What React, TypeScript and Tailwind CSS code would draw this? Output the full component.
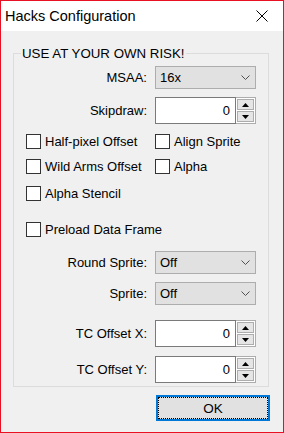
import { useState } from "react";

const font = { fontFamily: '"Liberation Sans", Arial, sans-serif' };

function Chevron() {
  return (
    <svg width="9" height="5" viewBox="0 0 9 5" className="mr-[5px]">
      <polyline points="0.5,0.5 4.5,4.5 8.5,0.5" fill="none" stroke="#505050" strokeWidth="1" />
    </svg>
  );
}

function ComboBox({ value }: { value: string }) {
  return (
    <div className="w-[101px] h-[23px] border border-[#adadad] bg-[#e1e1e1] flex items-center justify-between">
      <span className="pl-[4px]">{value}</span>
      <Chevron />
    </div>
  );
}

function SpinBox({ value }: { value: number }) {
  return (
    <div className="w-[101px] h-[27px] flex">
      <div className="flex-1 border border-[#7a7a7a] bg-white flex items-center justify-end pr-[5px]">
        {value}
      </div>
      <div className="w-[20px] flex flex-col border-y border-r border-[#adadad] bg-white">
        <div className="flex-1 m-[1px] mb-0 border border-[#adadad] bg-[#e5e5e5] flex items-center justify-center">
          <svg width="7" height="4" viewBox="0 0 7 4">
            <polygon points="3.5,0 7,4 0,4" fill="#000" />
          </svg>
        </div>
        <div className="flex-1 m-[1px] border border-[#adadad] bg-[#e5e5e5] flex items-center justify-center">
          <svg width="7" height="4" viewBox="0 0 7 4">
            <polygon points="0,0 7,0 3.5,4" fill="#000" />
          </svg>
        </div>
      </div>
    </div>
  );
}

function Row({ label, children, className }: { label: string; children: React.ReactNode; className: string }) {
  return (
    <div className={`flex items-center ${className}`}>
      <span className="w-[133px] text-right">{label}</span>
      <div className="ml-[8px]">{children}</div>
    </div>
  );
}

function Check({ label, checked, onToggle }: { label: string; checked: boolean; onToggle: () => void }) {
  return (
    <label className="flex items-center h-[15px] cursor-default" onClick={onToggle}>
      <span className="w-[15px] h-[15px] border border-[#333] bg-white flex items-center justify-center">
        {checked && (
          <svg width="11" height="9" viewBox="0 0 11 9">
            <polyline points="1,4.5 4,7.5 10,1" fill="none" stroke="#000" strokeWidth="1.5" />
          </svg>
        )}
      </span>
      <span className="ml-[4px]">{label}</span>
    </label>
  );
}

export default function App() {
  const [checks, setChecks] = useState<Record<string, boolean>>({});
  const toggle = (k: string) => setChecks((c) => ({ ...c, [k]: !c[k] }));
  const cb = (k: string) => <Check label={k} checked={!!checks[k]} onToggle={() => toggle(k)} />;

  return (
    <div
      className="w-[284px] h-[433px] border border-[#e81123] bg-[#f0f0f0] flex flex-col text-[13px] text-black leading-[15px]"
      style={font}
    >
      <div className="h-[30px] bg-white flex items-center justify-between pl-[4px] pr-[15px]">
        <span className="text-[14.5px] leading-[18px]">Hacks Configuration</span>
        <svg width="12" height="12" viewBox="0 0 12 12">
          <path d="M0.5 0.5 L11.5 11.5 M11.5 0.5 L0.5 11.5" stroke="#000" strokeWidth="1" />
        </svg>
      </div>

      <div className="flex flex-col pl-[12px] pr-[14px] pt-[15px]">
        <fieldset className="border border-[#dcdcdc] pb-[3px]">
          <legend className="ml-[7px] px-[1px] text-[13.3px] leading-[15px]">USE AT YOUR OWN RISK!</legend>

          <Row label="MSAA:" className="mt-[5px] h-[23px]">
            <ComboBox value="16x" />
          </Row>
          <Row label="Skipdraw:" className="mt-[8px] h-[27px]">
            <SpinBox value={0} />
          </Row>

          <div className="flex mt-[10px] pl-[12px]">
            <div className="w-[129px]">{cb("Half-pixel Offset")}</div>
            {cb("Align Sprite")}
          </div>
          <div className="flex mt-[10px] pl-[12px]">
            <div className="w-[129px]">{cb("Wild Arms Offset")}</div>
            {cb("Alpha")}
          </div>
          <div className="flex mt-[12px] pl-[12px]">{cb("Alpha Stencil")}</div>
          <div className="flex mt-[21px] pl-[12px]">{cb("Preload Data Frame")}</div>

          <Row label="Round Sprite:" className="mt-[14px] h-[23px]">
            <ComboBox value="Off" />
          </Row>
          <Row label="Sprite:" className="mt-[8px] h-[23px]">
            <ComboBox value="Off" />
          </Row>
          <Row label="TC Offset X:" className="mt-[15px] h-[27px]">
            <SpinBox value={0} />
          </Row>
          <Row label="TC Offset Y:" className="mt-[9px] h-[27px]">
            <SpinBox value={0} />
          </Row>
        </fieldset>

        <button className="self-end mr-[-1px] mt-[8px] w-[114px] h-[26px] border-2 border-[#0078d7] bg-[#e1e1e1]">
          <span className="w-full h-full border border-dotted border-black flex items-center justify-center text-[13.5px]">
            OK
          </span>
        </button>
      </div>
    </div>
  );
}
